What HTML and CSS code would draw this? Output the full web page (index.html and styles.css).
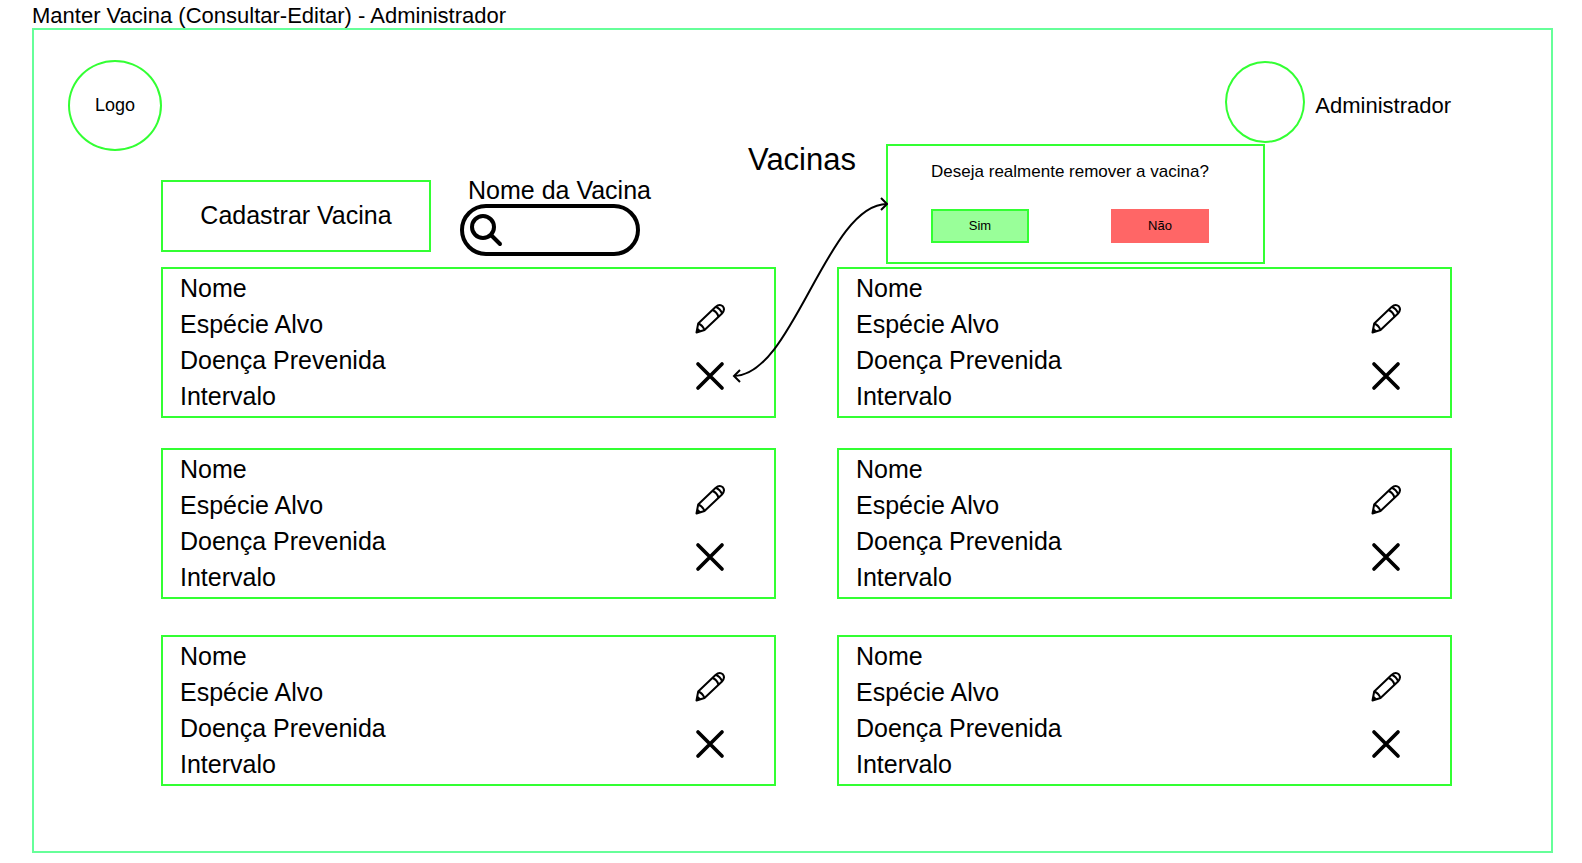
FILE: index.html
```html
<!DOCTYPE html>
<html lang="pt-BR">
<head>
<meta charset="utf-8">
<meta name="viewport" content="width=device-width, initial-scale=1">
<title>Manter Vacina</title>
<link rel="stylesheet" href="styles.css">
</head>
<body>
<svg class="sprite" aria-hidden="true">
  <symbol id="pencil" viewBox="0 0 30 30">
    <g fill="none" stroke="currentColor" stroke-width="2" stroke-linejoin="round">
      <path d="M1.500 28.500 3.200 19.500 20.500 3Q24.500 -0.500 27.800 2.300Q30.500 5.500 27 9.500L9.500 26Z"/>
      <path d="M3.200 19.500Q7.500 21 9.500 26M17.500 6Q22 7.500 23.500 12.700M21 2.800Q25 4.500 27.200 9"/>
    </g>
    <path d="M1 29 2.300 23.500 6.500 27.300Z" fill="currentColor"/>
  </symbol>
  <symbol id="cross" viewBox="0 0 30 30">
    <path d="M3 3 27 27M27 3 3 27" fill="none" stroke="currentColor" stroke-width="3.700" stroke-linecap="round"/>
  </symbol>
</svg>

<p class="caption">Manter Vacina (Consultar-Editar) - Administrador</p>
<main class="frame">
  <header class="header">
    <div class="logo">Logo</div>
    <div class="user">
      <span class="avatar"></span>
      <span>Administrador</span>
    </div>
  </header>

  <div class="toolbar">
    <button class="create" type="button">Cadastrar Vacina</button>
    <div class="search">
      <label class="search-label" for="busca">Nome da Vacina</label>
      <div class="search-box">
        <svg class="search-icon" viewBox="0 0 34 34" aria-hidden="true">
          <g fill="none" stroke="currentColor" stroke-width="4" stroke-linecap="round">
            <circle cx="14" cy="14" r="11"/>
            <path d="M22.500 22.500 31 31"/>
          </g>
        </svg>
        <input class="search-input" id="busca" type="text">
      </div>
    </div>
    <h1 class="title">Vacinas</h1>
    <section class="confirm" role="dialog" aria-labelledby="pergunta">
      <svg class="connector" viewBox="0 0 158 188" aria-hidden="true">
        <g fill="none" stroke="currentColor" stroke-width="2">
          <path d="M4 180C63 180 97 8 157 8"/>
          <path d="M10 174 4 180 10 186M151 2 157 8 151 14"/>
        </g>
      </svg>
      <p class="question" id="pergunta">Deseja realmente remover a vacina?</p>
      <div class="choices">
        <button class="choice yes" type="button">Sim</button>
        <button class="choice no" type="button">Não</button>
      </div>
    </section>
  </div>

  <div class="cards">
    <article class="card">
      <ul class="fields"><li>Nome</li><li>Espécie Alvo</li><li>Doença Prevenida</li><li>Intervalo</li></ul>
      <div class="actions">
        <button class="action" type="button" aria-label="Editar"><svg class="icon"><use href="#pencil"/></svg></button>
        <button class="action" type="button" aria-label="Remover"><svg class="icon"><use href="#cross"/></svg></button>
      </div>
    </article>
    <article class="card">
      <ul class="fields"><li>Nome</li><li>Espécie Alvo</li><li>Doença Prevenida</li><li>Intervalo</li></ul>
      <div class="actions">
        <button class="action" type="button" aria-label="Editar"><svg class="icon"><use href="#pencil"/></svg></button>
        <button class="action" type="button" aria-label="Remover"><svg class="icon"><use href="#cross"/></svg></button>
      </div>
    </article>
    <article class="card">
      <ul class="fields"><li>Nome</li><li>Espécie Alvo</li><li>Doença Prevenida</li><li>Intervalo</li></ul>
      <div class="actions">
        <button class="action" type="button" aria-label="Editar"><svg class="icon"><use href="#pencil"/></svg></button>
        <button class="action" type="button" aria-label="Remover"><svg class="icon"><use href="#cross"/></svg></button>
      </div>
    </article>
    <article class="card">
      <ul class="fields"><li>Nome</li><li>Espécie Alvo</li><li>Doença Prevenida</li><li>Intervalo</li></ul>
      <div class="actions">
        <button class="action" type="button" aria-label="Editar"><svg class="icon"><use href="#pencil"/></svg></button>
        <button class="action" type="button" aria-label="Remover"><svg class="icon"><use href="#cross"/></svg></button>
      </div>
    </article>
    <article class="card last-row">
      <ul class="fields"><li>Nome</li><li>Espécie Alvo</li><li>Doença Prevenida</li><li>Intervalo</li></ul>
      <div class="actions">
        <button class="action" type="button" aria-label="Editar"><svg class="icon"><use href="#pencil"/></svg></button>
        <button class="action" type="button" aria-label="Remover"><svg class="icon"><use href="#cross"/></svg></button>
      </div>
    </article>
    <article class="card last-row">
      <ul class="fields"><li>Nome</li><li>Espécie Alvo</li><li>Doença Prevenida</li><li>Intervalo</li></ul>
      <div class="actions">
        <button class="action" type="button" aria-label="Editar"><svg class="icon"><use href="#pencil"/></svg></button>
        <button class="action" type="button" aria-label="Remover"><svg class="icon"><use href="#cross"/></svg></button>
      </div>
    </article>
  </div>
</main>
</body>
</html>
```

FILE: styles.css
```css
:root {
  --green: #33ff33;
  --frame-green: #66ff99;
}

* {
  box-sizing: border-box;
}

body {
  margin: 0;
  background: #fff;
  color: #000;
  font-family: "Liberation Sans", Arial, sans-serif;
}

button,
input {
  margin: 0;
  padding: 0;
  border: 0;
  background: transparent;
  color: inherit;
  font: inherit;
}

button {
  cursor: pointer;
}

.sprite {
  display: none;
}

.caption {
  margin: 0;
  padding: 3px 32px 0;
  font-size: 22px;
  line-height: 25px;
}

.frame {
  margin: 0 29px 10px 32px;
  padding: 30px 99px 65px 127px;
  border: 2px solid var(--frame-green);
}

.header {
  display: flex;
  align-items: center;
  justify-content: space-between;
  margin: 0 1px -7px -93px;
}

.logo {
  display: flex;
  align-items: center;
  justify-content: center;
  width: 94px;
  height: 91px;
  border: 2px solid var(--green);
  border-radius: 50%;
  font-size: 18px;
}

.user {
  display: flex;
  align-items: center;
  gap: 10px;
  font-size: 22px;
  line-height: 26px;
}

.avatar {
  width: 80px;
  height: 82px;
  margin-bottom: 8px;
  border: 2px solid var(--green);
  border-radius: 50%;
}

.toolbar {
  display: flex;
  align-items: flex-end;
  padding-bottom: 3px;
}

.create {
  width: 270px;
  height: 72px;
  margin-bottom: 12px;
  padding-bottom: 2px;
  border: 2px solid var(--green);
  font-size: 25px;
}

.search {
  margin: 0 0 8px 29px;
}

.search-label {
  display: block;
  padding: 0 0 1px 8px;
  font-size: 25px;
  line-height: 26px;
  white-space: nowrap;
}

.search-box {
  display: flex;
  align-items: center;
  gap: 4px;
  width: 180px;
  height: 52px;
  padding: 0 20px 0 5px;
  border: 4px solid #000;
  border-radius: 26px;
}

.search-icon {
  flex: none;
  width: 34px;
  height: 34px;
}

.search-input {
  flex: 1;
  min-width: 0;
  outline: 0;
  font-size: 18px;
}

.title {
  align-self: flex-start;
  margin: 0 30px 0 auto;
  font-size: 31px;
  font-weight: 400;
  line-height: 32px;
}

.confirm {
  position: relative;
  width: 379px;
  margin-right: 187px;
  padding: 17px 54px 19px 43px;
  border: 2px solid var(--green);
}

.connector {
  position: absolute;
  top: 50px;
  right: 100%;
  width: 158px;
  height: 188px;
  pointer-events: none;
}

.question {
  margin: 0 0 28px;
  font-size: 17px;
  line-height: 18px;
  text-align: center;
  white-space: nowrap;
}

.choices {
  display: flex;
  justify-content: space-between;
}

.choice {
  width: 98px;
  height: 34px;
  padding-bottom: 2px;
  border: 2px solid;
  font-size: 13px;
}

.yes {
  border-color: var(--green);
  background: #99ff99;
}

.no {
  border-color: #ff6666;
  background: #ff6666;
}

.cards {
  display: grid;
  grid-template-columns: 1fr 1fr;
  gap: 30px 61px;
}

.card {
  display: flex;
  justify-content: space-between;
  padding: 1px 49px 2px 17px;
  border: 2px solid var(--green);
}

.last-row {
  margin-top: 6px;
}

.fields {
  margin: 0;
  padding: 0;
  font-size: 25px;
  line-height: 36px;
  list-style: none;
}

.actions {
  display: flex;
  flex-direction: column;
  gap: 27px;
  padding-top: 34px;
}

.action,
.icon {
  display: block;
  width: 30px;
  height: 30px;
}
```
